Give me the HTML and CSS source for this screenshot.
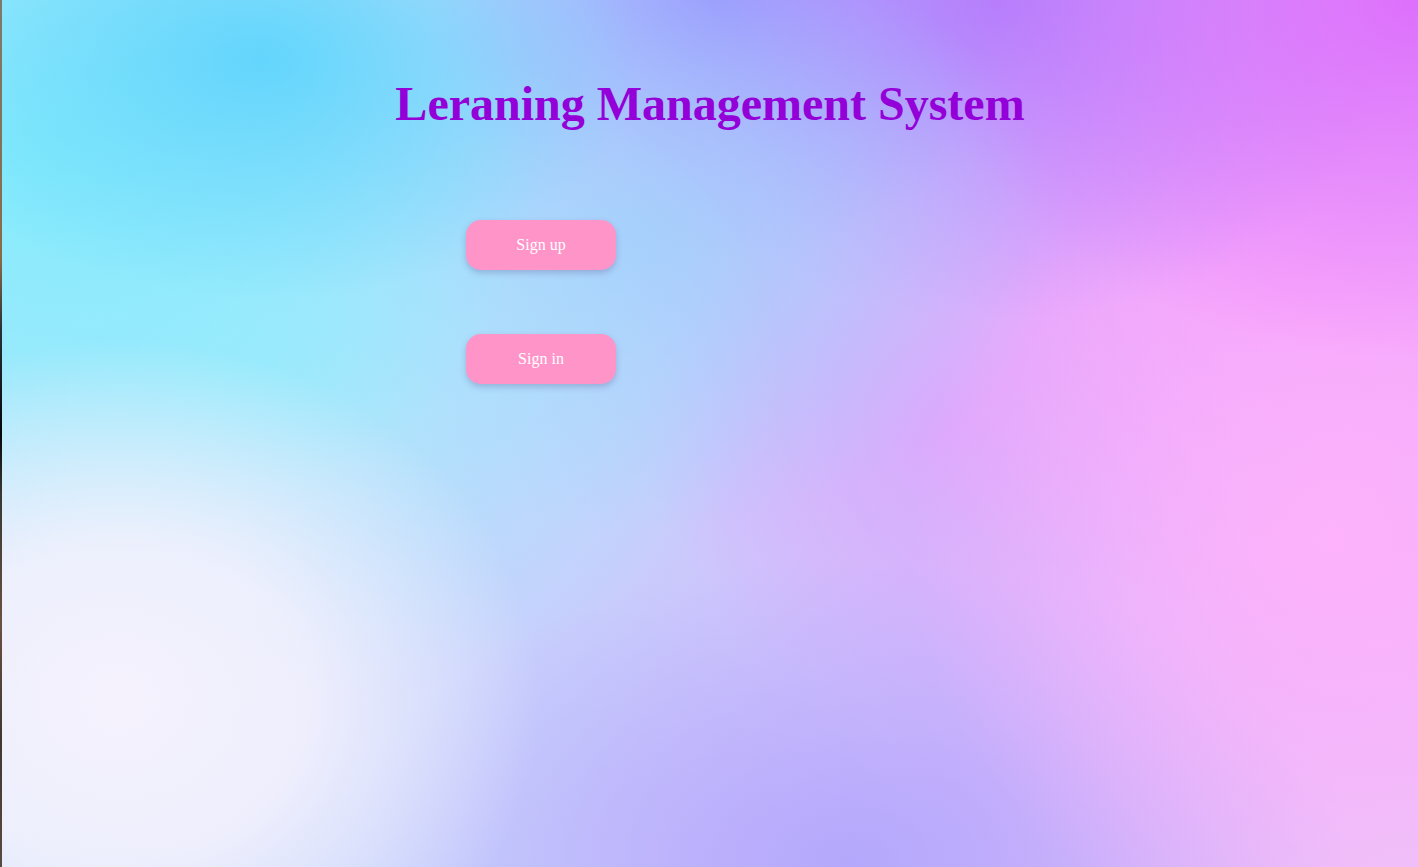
FILE: index.html
```html
<!DOCTYPE html>
<html lang="en">
<head>
<meta charset="utf-8">
<title>Learning Management System</title>
<link rel="stylesheet" href="styles.css">
</head>
<body>
<div class="edge"></div>
<main class="page">
  <h1 class="title">Leraning Management System</h1>
  <div class="actions">
    <button class="btn">Sign up</button>
    <button class="btn">Sign in</button>
  </div>
</main>
</body>
</html>
```
FILE: styles.css
```css
html, body {
  height: 100%;
}
body {
  margin: 0;
  display: flex;
  font-family: "Liberation Serif", "Times New Roman", serif;
  background-color: #c8c8fc;
  background-image:
    radial-gradient(ellipse 420px 360px at 120px 700px, #f5f2fd 0%, rgba(245,242,253,0.85) 45%, rgba(245,242,253,0) 100%),
    radial-gradient(ellipse 380px 240px at 260px 60px, #63d5fc 0%, rgba(99,213,252,0) 100%),
    radial-gradient(ellipse 500px 420px at 40px 150px, #84ecfc 0%, rgba(132,236,252,0.6) 50%, rgba(132,236,252,0) 100%),
    radial-gradient(ellipse 520px 340px at 260px 360px, #a6eafc 0%, rgba(166,234,252,0) 100%),
    radial-gradient(ellipse 420px 300px at 640px 230px, #a6cafc 0%, rgba(166,202,252,0) 100%),
    radial-gradient(ellipse 500px 360px at 1420px 0px, #dd6ffc 0%, rgba(221,111,252,0) 100%),
    radial-gradient(ellipse 420px 320px at 1000px 0px, #b080fc 0%, rgba(176,128,252,0) 100%),
    radial-gradient(ellipse 300px 260px at 720px 0px, #8ea0fd 0%, rgba(142,160,253,0) 100%),
    radial-gradient(ellipse 420px 420px at 1330px 540px, #fdb2fb 0%, rgba(253,178,251,0) 100%),
    radial-gradient(ellipse 500px 320px at 1300px 290px, #f59ffc 0%, rgba(245,159,252,0) 100%),
    radial-gradient(ellipse 500px 300px at 850px 860px, #b4a8fc 0%, rgba(180,168,252,0) 100%),
    radial-gradient(ellipse 420px 260px at 1400px 860px, #ecc2f8 0%, rgba(236,194,248,0) 100%),
    radial-gradient(ellipse 300px 300px at 950px 420px, #d8aafc 0%, rgba(216,170,252,0) 100%),
    linear-gradient(100deg, #c0e4fc 0%, #c8cdfc 45%, #d8b8fc 70%, #f0b4fa 100%);
  background-attachment: fixed;
}
.edge {
  width: 2px;
  flex: none;
  background: linear-gradient(180deg, #7e7a6a 0%, #8a6a48 30%, #2a3038 38%, #05080c 50%, #3a3834 57%, #6a5040 72%, #403830 85%, #5a4a40 100%);
}
.page {
  flex: 1;
  padding: 0 6px 0 6px;
  display: flex;
  flex-direction: column;
  align-items: center;
}
.title {
  margin: 73px 0 0;
  font-size: 48px;
  font-weight: bold;
  color: #9400d8;
  line-height: 62px;
  text-align: center;
}
.actions {
  align-self: flex-start;
  margin: 85px 0 0 458px;
  display: flex;
  flex-direction: column;
  gap: 64px;
}
.btn {
  width: 150px;
  height: 50px;
  border: none;
  border-radius: 15px;
  background: #ff94c9;
  color: #ffffff;
  font-family: "Liberation Serif", "Times New Roman", serif;
  font-size: 16px;
  box-shadow: 0 3px 6px rgba(90, 80, 140, 0.3);
  cursor: pointer;
}
```
